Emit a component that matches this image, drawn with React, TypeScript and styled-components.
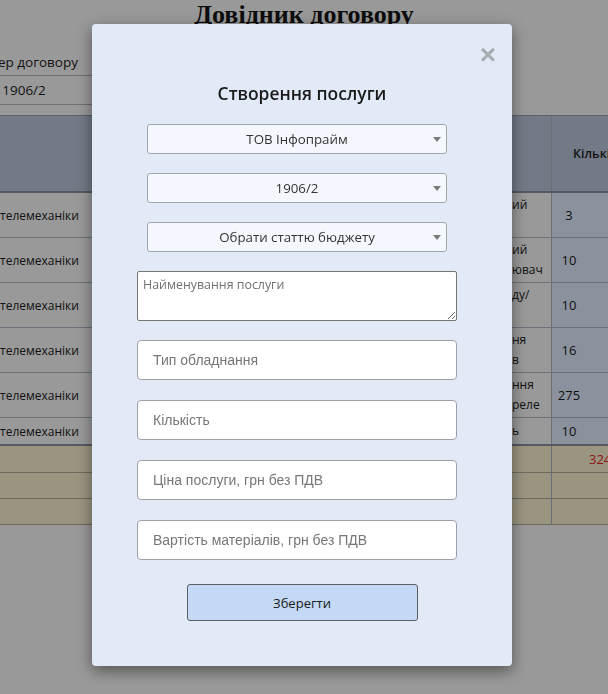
import styled, { createGlobalStyle } from 'styled-components';

const GlobalStyle = createGlobalStyle`
  body {
    margin: 0;
    font-family: 'Open Sans', 'Noto Sans', sans-serif;
    overflow: hidden;
  }
`;

const Page = styled.div`
  min-height: 694px;
  background: #999999;
  color: #111;
  overflow: hidden;
`;

const Title = styled.h1`
  margin: 0;
  font-family: 'Liberation Serif', serif;
  font-size: 26px;
  line-height: 30px;
  font-weight: bold;
  text-align: center;
  color: #0d0d0d;
`;

const ContractField = styled.div`
  width: 250px;
  margin: 22px 0 0 -101px;
  text-align: center;
  font-size: 13.5px;
`;

const FieldLabel = styled.div`
  line-height: 20px;
`;

const FieldValue = styled.div`
  margin-top: 3px;
  height: 30px;
  box-sizing: border-box;
  border-top: 1px solid #6f6f6f;
  border-bottom: 1px solid #6f6f6f;
  line-height: 28px;
`;

const Table = styled.div`
  margin: 10px 0 0 -8px;
  width: 730px;
  border-top: 1px solid #5d6068;
  font-size: 12px;
`;

type Tone = 'head' | 'body' | 'total';

const Row = styled.div<{ $h: number; $tone: Tone; $thick?: boolean }>`
  display: grid;
  grid-template-columns: 478px 82px 170px;
  height: ${p => p.$h}px;
  box-sizing: border-box;
  border-bottom: ${p => (p.$thick ? '2px solid #555961' : p.$tone === 'total' ? '1px solid #6b6a5e' : '1px solid #6d7079')};
  background: ${p => (p.$tone === 'head' ? '#737a87' : p.$tone === 'total' ? '#9a9581' : '#999999')};
`;

const NameCell = styled.div`
  display: flex;
  align-items: center;
  padding-left: 8px;
`;

const ServiceCell = styled.div`
  display: flex;
  flex-direction: column;
  justify-content: center;
  padding-left: 42px;
  line-height: 20px;
  border-right: 1px solid #6a6e75;
  min-height: 0;
`;

const QtyCell = styled.div<{ $tone: Tone }>`
  display: flex;
  align-items: center;
  font-size: 13px;
  background: ${p => (p.$tone === 'body' ? '#8b929d' : 'transparent')};
`;

const HeadText = styled.span`
  padding-left: 21px;
  font-size: 12.5px;
  font-weight: 600;
  color: #141414;
`;

const Num = styled.span`
  width: 34px;
  text-align: center;
`;

const TotalNum = styled.span`
  padding-left: 37px;
  color: #8e1414;
`;

const Modal = styled.div`
  position: fixed;
  left: 92px;
  top: 24px;
  width: 420px;
  height: 642px;
  box-sizing: border-box;
  background: #e1eaf6;
  border-radius: 4px;
  box-shadow: 0 5px 15px rgba(0, 0, 0, 0.45);
  display: flex;
  flex-direction: column;
  align-items: center;
  padding-top: 57px;
`;

const Close = styled.button`
  position: absolute;
  top: 17px;
  right: 16px;
  border: none;
  background: none;
  padding: 0;
  font-family: 'Liberation Sans', Arial, sans-serif;
  font-size: 28px;
  line-height: 28px;
  font-weight: bold;
  color: #a9adb2;
  cursor: pointer;
`;

const ModalTitle = styled.h2`
  margin: 0;
  font-size: 17.4px;
  line-height: 24px;
  font-weight: 600;
  color: #1b1b1b;
`;

const Form = styled.form`
  display: flex;
  flex-direction: column;
  align-items: center;
  margin-top: 19px;
`;

const Fields = styled.div`
  display: flex;
  flex-direction: column;
  align-items: center;
  gap: 19px;
  margin-right: 10px;
`;

const SelectBox = styled.div`
  position: relative;
  width: 300px;
  height: 30px;

  &::after {
    content: '';
    position: absolute;
    right: 6px;
    top: 13px;
    border-left: 4px solid transparent;
    border-right: 4px solid transparent;
    border-top: 5px solid #7a7a7a;
    pointer-events: none;
  }
`;

const Select = styled.select`
  appearance: none;
  width: 100%;
  height: 100%;
  box-sizing: border-box;
  border: 1px solid #a2a6ac;
  border-radius: 3px;
  background: #f4f8fe;
  font-family: 'Open Sans', sans-serif;
  font-size: 13.3px;
  color: #333;
  text-align: center;
  text-align-last: center;
  padding: 0 18px;
`;

const TextArea = styled.textarea`
  width: 320px;
  height: 50px;
  box-sizing: border-box;
  border: 1px solid #767676;
  border-radius: 2px;
  padding: 5px;
  font-family: 'Open Sans', sans-serif;
  font-size: 12.4px;
  line-height: 16px;
  background: #fff;

  &::placeholder {
    color: #707070;
  }
`;

const InputGroup = styled.div`
  display: flex;
  flex-direction: column;
  gap: 20px;
`;

const Input = styled.input`
  width: 320px;
  height: 40px;
  box-sizing: border-box;
  border: 1px solid #9ea2a8;
  border-radius: 4px;
  padding: 0 15px;
  font-family: 'Liberation Sans', Arial, sans-serif;
  font-size: 14px;
  background: #fff;

  &::placeholder {
    color: #777;
  }
`;

const SaveButton = styled.button`
  margin-top: 24px;
  width: 231px;
  height: 37px;
  border: 1px solid #5c5f63;
  border-radius: 3px;
  background: #c3d9f5;
  font-family: 'Open Sans', sans-serif;
  font-size: 13px;
  color: #1a1a1a;
`;

const rows = [
  { h: 45, service: ['ий', ''], qty: '3' },
  { h: 45, service: ['ий', 'ювач'], qty: '10' },
  { h: 45, service: ['ду/', ''], qty: '10' },
  { h: 45, service: ['ня', 'в'], qty: '16' },
  { h: 45, service: ['ння', 'реле'], qty: '275' },
  { h: 28, service: ['ь'], qty: '10' },
];

const totals = [
  { h: 27, value: '3248' },
  { h: 26, value: '' },
  { h: 26, value: '' },
];

export default function App() {
  return (
    <>
      <GlobalStyle />
      <Page>
        <Title>Довідник договору</Title>
        <ContractField>
          <FieldLabel>Номер договору</FieldLabel>
          <FieldValue>1906/2</FieldValue>
        </ContractField>
        <Table>
          <Row $h={77} $tone="head" $thick>
            <NameCell />
            <ServiceCell />
            <QtyCell $tone="head">
              <HeadText>Кількість</HeadText>
            </QtyCell>
          </Row>
          {rows.map((r, i) => (
            <Row key={i} $h={r.h} $tone="body" $thick={i === rows.length - 1}>
              <NameCell>телемеханіки</NameCell>
              <ServiceCell>
                {r.service.map((line, j) => (
                  <div key={j}>{line || '\u00a0'}</div>
                ))}
              </ServiceCell>
              <QtyCell $tone="body">
                <Num>{r.qty}</Num>
              </QtyCell>
            </Row>
          ))}
          {totals.map((t, i) => (
            <Row key={i} $h={t.h} $tone="total">
              <NameCell />
              <ServiceCell />
              <QtyCell $tone="total">{t.value && <TotalNum>{t.value}</TotalNum>}</QtyCell>
            </Row>
          ))}
        </Table>
      </Page>

      <Modal>
        <Close type="button">×</Close>
        <ModalTitle>Створення послуги</ModalTitle>
        <Form onSubmit={e => e.preventDefault()}>
          <Fields>
            <SelectBox>
              <Select defaultValue="infoprime">
                <option value="infoprime">ТОВ Інфопрайм</option>
              </Select>
            </SelectBox>
            <SelectBox>
              <Select defaultValue="1906/2">
                <option value="1906/2">1906/2</option>
              </Select>
            </SelectBox>
            <SelectBox>
              <Select defaultValue="">
                <option value="">Обрати статтю бюджету</option>
              </Select>
            </SelectBox>
            <TextArea placeholder="Найменування послуги" />
            <InputGroup>
              <Input placeholder="Тип обладнання" />
              <Input placeholder="Кількість" />
              <Input placeholder="Ціна послуги, грн без ПДВ" />
              <Input placeholder="Вартість матеріалів, грн без ПДВ" />
            </InputGroup>
          </Fields>
          <SaveButton type="submit">Зберегти</SaveButton>
        </Form>
      </Modal>
    </>
  );
}
